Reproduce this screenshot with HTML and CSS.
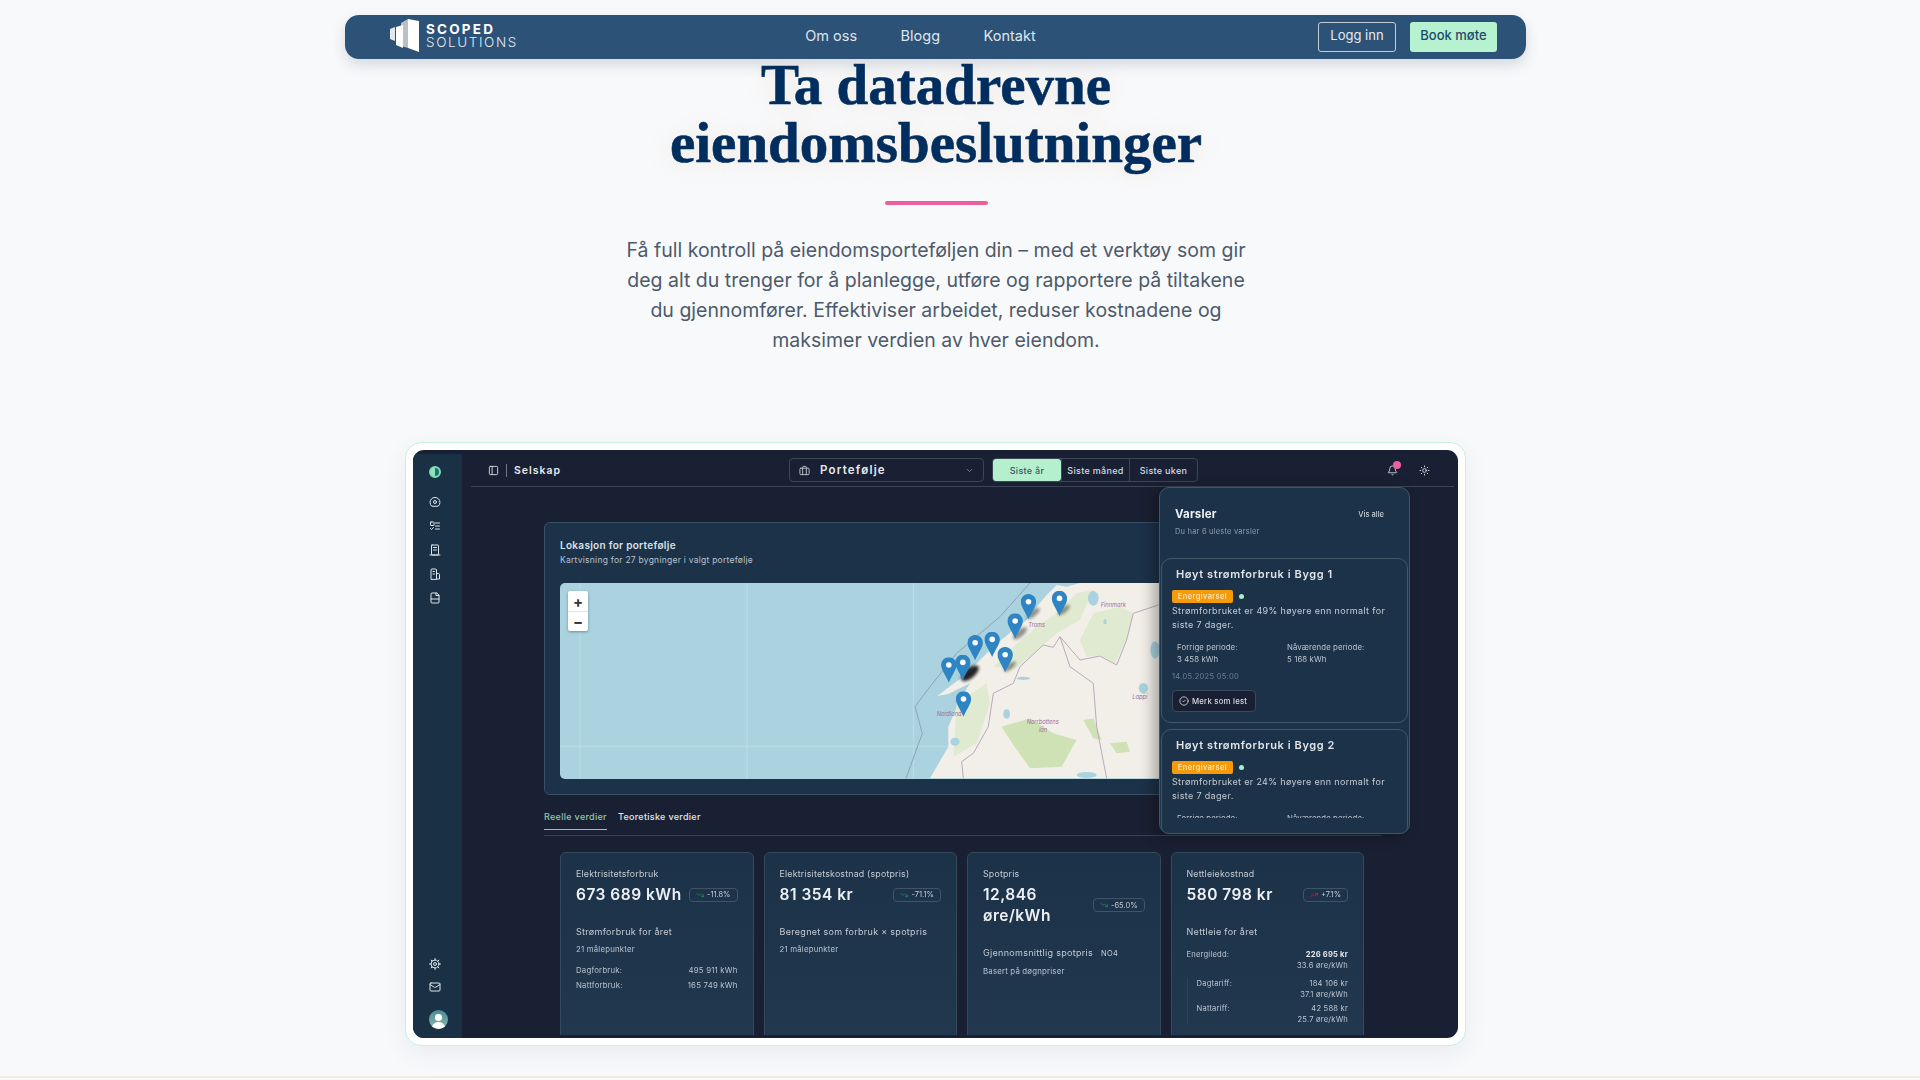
FILE: index.html
```html
<!DOCTYPE html>
<html lang="no">
<head>
    <meta charset="UTF-8">
    <meta name="viewport" content="width=device-width, initial-scale=1.0">
    <title>Scoped Solutions</title>
    <link rel="stylesheet" href="styles.css">
</head>
<body>
    <svg class="icon-sprite" aria-hidden="true">
        <symbol id="i-panel" viewBox="0 0 24 24"><rect x="3" y="3" width="18" height="18" rx="2"/><path d="M9 3v18"/></symbol>
        <symbol id="i-case" viewBox="0 0 24 24"><rect x="2" y="7" width="20" height="14" rx="2"/><path d="M16 21V5a2 2 0 0 0-2-2h-4a2 2 0 0 0-2 2v16"/></symbol>
        <symbol id="i-chevron" viewBox="0 0 24 24"><path d="m6 9 6 6 6-6"/></symbol>
        <symbol id="i-bell" viewBox="0 0 24 24"><path d="M10.268 21a2 2 0 0 0 3.464 0"/><path d="M3.262 15.326A1 1 0 0 0 4 17h16a1 1 0 0 0 .74-1.673C19.41 13.956 18 12.499 18 8A6 6 0 0 0 6 8c0 4.499-1.411 5.956-2.738 7.326"/></symbol>
        <symbol id="i-sun" viewBox="0 0 24 24"><circle cx="12" cy="12" r="4"/><path d="M12 2v2M12 20v2M4.93 4.93l1.41 1.41M17.66 17.66l1.41 1.41M2 12h2M20 12h2M6.34 17.66l-1.41 1.41M19.07 4.93l-1.41 1.41"/></symbol>
        <symbol id="i-gauge" viewBox="0 0 24 24"><path d="M5 20a10 10 0 1 1 14 0Z"/><circle cx="12" cy="12" r="3"/></symbol>
        <symbol id="i-list" viewBox="0 0 24 24"><rect x="3" y="4" width="7" height="7" rx="1"/><path d="m3 17 2 2 4-4M13 6h8M13 12h8M13 18h8"/></symbol>
        <symbol id="i-building" viewBox="0 0 24 24"><rect x="5" y="2" width="14" height="20" rx="1"/><path d="M2 22h20M9 7h6M9 12h6"/></symbol>
        <symbol id="i-office" viewBox="0 0 24 24"><path d="M4 22V4a2 2 0 0 1 2-2h7a2 2 0 0 1 2 2v18Z"/><path d="M15 11h4a2 2 0 0 1 2 2v9h-6M8 7h3M8 12h3"/></symbol>
        <symbol id="i-file" viewBox="0 0 24 24"><path d="M15 2H6a2 2 0 0 0-2 2v16a2 2 0 0 0 2 2h12a2 2 0 0 0 2-2V7Z"/><path d="M14 2v5h6M4 14h16"/></symbol>
        <symbol id="i-gear" viewBox="0 0 24 24"><circle cx="12" cy="12" r="8"/><circle cx="12" cy="12" r="3"/><path d="M12 1v3M12 20v3M1 12h3M20 12h3M4.2 4.2l2.1 2.1M17.7 17.7l2.1 2.1M4.2 19.8l2.1-2.1M17.7 6.3l2.1-2.1"/></symbol>
        <symbol id="i-mail" viewBox="0 0 24 24"><rect x="2" y="4" width="20" height="16" rx="2"/><path d="m22 7-8.97 5.7a1.94 1.94 0 0 1-2.06 0L2 7"/></symbol>
        <symbol id="i-check" viewBox="0 0 24 24"><circle cx="12" cy="12" r="10"/><path d="m9 12 2 2 4-4"/></symbol>
        <symbol id="i-down" viewBox="0 0 24 24"><path d="M22 17l-8.5-8.5-5 5L2 7M16 17h6v-6"/></symbol>
        <symbol id="i-up" viewBox="0 0 24 24"><path d="M22 7l-8.500 8.500-5-5L2 17M16 7h6v6"/></symbol>
        <symbol id="i-pin" viewBox="0 0 25 41"><path d="M12.5 0C5.600 0 0 5.600 0 12.500 0 20 8 30 12.500 41 17 30 25 20 25 12.500 25 5.600 19.400 0 12.500 0Z" fill="#2f84c4" stroke="none"/><circle cx="12.500" cy="12.500" r="4.500" fill="#fff" stroke="none"/></symbol>
    </svg>

    <header class="topbar">
        <a class="brand" href="#">
            <svg class="brand-mark" viewBox="0 0 30 34">
                <polygon points="0,11 5,9 5,23 0,21" fill="#e3e8ec"/>
                <polygon points="11,5 18,1 18,30 11,28" fill="#b9c0c6"/>
                <polygon points="6,9 13,7 13,30 6,27" fill="#ffffff"/>
                <polygon points="18,1 29,3 29,34 18,30" fill="#ffffff"/>
            </svg>
            <span class="brand-text">
                <span class="brand-top">SCOPED</span>
                <span class="brand-bottom">SOLUTIONS</span>
            </span>
        </a>
        <nav class="top-links">
            <a href="#">Om oss</a>
            <a href="#">Blogg</a>
            <a href="#">Kontakt</a>
        </nav>
        <div class="top-actions">
            <button class="btn-login">Logg inn</button>
            <button class="btn-book">Book møte</button>
        </div>
    </header>

    <section class="hero">
        <h1>Ta datadrevne<br>eiendomsbeslutninger</h1>
        <div class="hero-rule"></div>
        <p>Få full kontroll på eiendomsporteføljen din – med et verktøy som gir deg alt du trenger for å planlegge, utføre og rapportere på tiltakene du gjennomfører. Effektiviser arbeidet, reduser kostnadene og maksimer verdien av hver eiendom.</p>
    </section>

    <div class="shot-frame">
        <div class="dash">
            <aside class="side">
                <div class="side-logo"></div>
                <svg class="ic side-ic"><use href="#i-gauge"/></svg>
                <svg class="ic side-ic"><use href="#i-list"/></svg>
                <svg class="ic side-ic"><use href="#i-building"/></svg>
                <svg class="ic side-ic"><use href="#i-office"/></svg>
                <svg class="ic side-ic"><use href="#i-file"/></svg>
                <div class="side-bottom">
                    <svg class="ic side-ic"><use href="#i-gear"/></svg>
                    <svg class="ic side-ic"><use href="#i-mail"/></svg>
                    <div class="avatar"><span class="avatar-head"></span><span class="avatar-body"></span></div>
                </div>
            </aside>

            <main class="main">
                <div class="dash-head">
                    <svg class="ic head-ic"><use href="#i-panel"/></svg>
                    <span class="head-sep"></span>
                    <span class="head-title">Selskap</span>
                    <div class="picker">
                        <svg class="ic picker-ic"><use href="#i-case"/></svg>
                        <span class="picker-name">Portefølje</span>
                        <svg class="ic picker-chev"><use href="#i-chevron"/></svg>
                    </div>
                    <div class="range">
                        <span class="range-item range-on">Siste år</span>
                        <span class="range-item">Siste måned</span>
                        <span class="range-item">Siste uken</span>
                    </div>
                    <div class="head-tools">
                        <span class="bell"><svg class="ic bell-ic"><use href="#i-bell"/></svg><span class="bell-dot"></span></span>
                        <svg class="ic sun-ic"><use href="#i-sun"/></svg>
                    </div>
                </div>

                <div class="content">
                    <div class="map-card">
                        <div class="map-title">Lokasjon for portefølje</div>
                        <div class="map-sub">Kartvisning for 27 bygninger i valgt portefølje</div>
                        <div class="map">
                            <svg class="map-svg" viewBox="0 0 821 196" preserveAspectRatio="xMinYMin slice">
                                <g transform="translate(320 -13) scale(.3333)">
                                    <path class="grid-line" d="M-900 0V700M-399 0V700M100 0V700"/>
                                    <path class="grid-line" d="M-960 529H1500"/>
                                    <path class="land" d="M600 39 560 50 530 45 500 75 470 110 440 150 400 180 340 230 300 270 250 320 215 345 172 378 205 372 270 340 240 390 205 470 205 530 150 625H1500V39Z"/>
                                    <g class="forest-soft">
                                        <path class="forest" d="M365 470 450 445 520 490 590 510 545 590 450 595 400 525Z"/>
                                        <path class="forest" d="M610 450 640 445 665 510 640 505Z"/>
                                        <path class="forest" d="M690 520 740 515 750 545 710 550Z"/>
                                        <path class="forest thin" d="M600 210 640 130 720 110 760 130 740 210 705 280 660 255 620 260Z"/>
                                        <path class="forest thin" d="M340 290 400 230 470 170 530 130 590 70 640 60 600 150 530 190 450 260 400 300Z"/>
                                        <path class="forest thin" d="M230 400 320 340 330 400 290 520 220 560Z"/>
                                    </g>
                                    <g class="lake">
                                        <ellipse cx="640" cy="85" rx="16" ry="22"/>
                                        <ellipse cx="675" cy="155" rx="5" ry="8"/>
                                        <ellipse cx="380" cy="432" rx="10" ry="14"/>
                                        <ellipse cx="790" cy="355" rx="14" ry="16"/>
                                        <ellipse cx="825" cy="240" rx="14" ry="26"/>
                                        <ellipse cx="225" cy="515" rx="14" ry="12"/>
                                        <ellipse cx="430" cy="325" rx="20" ry="5"/>
                                        <ellipse cx="620" cy="615" rx="30" ry="9"/>
                                    </g>
                                    <path class="sea-line" d="M450 39 360 140 230 250 150 350 105 410 127 490 78 625"/>
                                    <path class="border" d="M835 105 760 130 740 210 710 285 660 258 600 270 540 200 520 232 490 225 420 290 400 340 340 370 325 470 280 550 245 575 250 625"/>
                                    <path class="border" d="M540 200 570 290 640 340 650 470 680 625"/>
                                    <text class="map-label" x="662" y="112" font-size="17">Finnmark</text>
                                    <text class="map-label" x="445" y="170" font-size="17">Troms</text>
                                    <text class="map-label" x="170" y="437" font-size="17">Nordland</text>
                                    <text class="map-label" x="440" y="462" font-size="17">Norrbottens</text>
                                    <text class="map-label" x="477" y="485" font-size="17">län</text>
                                    <text class="map-label" x="757" y="387" font-size="17">Lappi</text>
                                    <ellipse class="pin-shadow" cx="460" cy="130" rx="24" ry="9" transform="rotate(-40 460 130)"/>
                                    <ellipse class="pin-shadow" cx="552" cy="120" rx="22" ry="8" transform="rotate(-40 552 120)"/>
                                    <ellipse class="pin-shadow" cx="420" cy="190" rx="26" ry="10" transform="rotate(-40 420 190)"/>
                                    <ellipse class="pin-shadow dark" cx="270" cy="310" rx="32" ry="15" transform="rotate(-40 270 310)"/>
                                    <ellipse class="pin-shadow" cx="390" cy="290" rx="22" ry="8" transform="rotate(-40 390 290)"/>
                                    <use class="pin" href="#i-pin" x="422" y="72" width="47" height="76"/>
                                    <use class="pin" href="#i-pin" x="515" y="62" width="47" height="76"/>
                                    <use class="pin" href="#i-pin" x="382" y="130" width="47" height="76"/>
                                    <use class="pin" href="#i-pin" x="262" y="195" width="47" height="76"/>
                                    <use class="pin" href="#i-pin" x="313" y="185" width="47" height="76"/>
                                    <use class="pin" href="#i-pin" x="352" y="231" width="47" height="76"/>
                                    <use class="pin" href="#i-pin" x="183" y="262" width="47" height="76"/>
                                    <use class="pin" href="#i-pin" x="225" y="254" width="47" height="76"/>
                                    <use class="pin" href="#i-pin" x="227" y="364" width="47" height="76"/>
                                </g>
                            </svg>
                            <div class="zoom-box">
                                <span class="zoom-btn">+</span>
                                <span class="zoom-btn">−</span>
                            </div>
                        </div>
                    </div>

                    <div class="value-tabs">
                        <span class="value-tab value-tab-on">Reelle verdier</span>
                        <span class="value-tab">Teoretiske verdier</span>
                    </div>

                    <div class="stats">
                        <div class="stat">
                            <div class="stat-label">Elektrisitetsforbruk</div>
                            <div class="stat-main">
                                <div class="stat-value">673 689 kWh</div>
                                <span class="delta"><svg class="ic delta-down"><use href="#i-down"/></svg>-11.8%</span>
                            </div>
                            <div class="stat-note">Strømforbruk for året</div>
                            <div class="stat-small">21 målepunkter</div>
                            <div class="stat-row first"><span>Dagforbruk:</span><span>495 911 kWh</span></div>
                            <div class="stat-row"><span>Nattforbruk:</span><span>165 749 kWh</span></div>
                        </div>
                        <div class="stat">
                            <div class="stat-label">Elektrisitetskostnad (spotpris)</div>
                            <div class="stat-main">
                                <div class="stat-value">81 354 kr</div>
                                <span class="delta"><svg class="ic delta-down"><use href="#i-down"/></svg>-71.1%</span>
                            </div>
                            <div class="stat-note">Beregnet som forbruk × spotpris</div>
                            <div class="stat-small">21 målepunkter</div>
                        </div>
                        <div class="stat">
                            <div class="stat-label">Spotpris</div>
                            <div class="stat-main stat-main-tall">
                                <div class="stat-value">12,846<br>øre/kWh</div>
                                <span class="delta"><svg class="ic delta-down"><use href="#i-down"/></svg>-65.0%</span>
                            </div>
                            <div class="stat-note">Gjennomsnittlig spotpris <span class="zone">NO4</span></div>
                            <div class="stat-small">Basert på døgnpriser</div>
                        </div>
                        <div class="stat">
                            <div class="stat-label">Nettleiekostnad</div>
                            <div class="stat-main">
                                <div class="stat-value">580 798 kr</div>
                                <span class="delta"><svg class="ic delta-up"><use href="#i-up"/></svg>+7.1%</span>
                            </div>
                            <div class="stat-note">Nettleie for året</div>
                            <div class="fee-row fee-first"><span>Energiledd:</span><span class="fee-val"><b>226 695 kr</b><br>33.6 øre/kWh</span></div>
                            <div class="fee-sub">
                                <div class="fee-row"><span>Dagtariff:</span><span class="fee-val">184 106 kr<br>37.1 øre/kWh</span></div>
                                <div class="fee-row"><span>Nattariff:</span><span class="fee-val">42 588 kr<br>25.7 øre/kWh</span></div>
                            </div>
                        </div>
                    </div>
                </div>

                <div class="alerts">
                    <div class="alerts-head">
                        <span class="alerts-title">Varsler</span>
                        <span class="alerts-all">Vis alle</span>
                    </div>
                    <div class="alerts-sub">Du har 6 uleste varsler</div>
                    <div class="alert">
                        <div class="alert-title">Høyt strømforbruk i Bygg 1</div>
                        <div class="alert-tags"><span class="alert-tag">Energivarsel</span><span class="alert-dot"></span></div>
                        <div class="alert-text">Strømforbruket er 49% høyere enn normalt for siste 7 dager.</div>
                        <div class="alert-periods">
                            <div>Forrige periode:<br>3 458 kWh</div>
                            <div>Nåværende periode:<br>5 168 kWh</div>
                        </div>
                        <div class="alert-date">14.05.2025 05:00</div>
                        <button class="alert-btn"><svg class="ic alert-btn-ic"><use href="#i-check"/></svg>Merk som lest</button>
                    </div>
                    <div class="alert alert-cut">
                        <div class="alert-title">Høyt strømforbruk i Bygg 2</div>
                        <div class="alert-tags"><span class="alert-tag">Energivarsel</span><span class="alert-dot"></span></div>
                        <div class="alert-text">Strømforbruket er 24% høyere enn normalt for siste 7 dager.</div>
                        <div class="alert-periods">
                            <div>Forrige periode:<br>3 458 kWh</div>
                            <div>Nåværende periode:<br>4 288 kWh</div>
                        </div>
                    </div>
                </div>
            </main>
        </div>
    </div>

    <div class="next-section"></div>
</body>
</html>
```

FILE: styles.css
```css
* {
    box-sizing: border-box;
}

html,
body {
    height: 100%;
}

body {
    margin: 0;
    height: 100vh;
    overflow: hidden;
    background-color: #f8f9fb;
    font-family: 'Inter', 'Liberation Sans', sans-serif;
}

.icon-sprite {
    display: none;
}

.ic {
    fill: none;
    stroke: currentColor;
    stroke-width: 2;
    stroke-linecap: round;
    stroke-linejoin: round;
    flex: none;
}

/* top bar */
.topbar {
    display: flex;
    align-items: center;
    width: 1181px;
    height: 44px;
    margin: 15px 0 0 345px;
    padding: 0 29px 0 45px;
    background-color: #2c5277;
    border-radius: 14px;
    box-shadow: 0 6px 14px rgba(30, 50, 70, 0.16);
    position: relative;
    z-index: 2;
}

.brand {
    display: flex;
    align-items: center;
    gap: 6px;
    text-decoration: none;
    color: #fff;
}

.brand-mark {
    width: 30px;
    height: 34px;
    margin-top: -4px;
}

.brand-text {
    display: flex;
    flex-direction: column;
    line-height: 12.500px;
    margin-top: -3px;
}

.brand-top {
    font-size: 13.5px;
    font-weight: 700;
    letter-spacing: 2.2px;
}

.brand-bottom {
    font-size: 13.5px;
    font-weight: 300;
    letter-spacing: 1.600px;
    color: #e4eaf0;
}

.top-links {
    display: flex;
    gap: 43.500px;
    margin: -4px 0 0 auto;
    padding-left: 5px;
}

.top-links a {
    color: #dfe5ec;
    text-decoration: none;
    font-size: 14.5px;
}

.top-actions {
    display: flex;
    gap: 14px;
    margin-left: auto;
    margin-top: -1px;
}

.top-actions button {
    height: 30px;
    font-family: inherit;
    font-size: 13px;
    border-radius: 3px;
    padding: 0 0 3px;
    white-space: nowrap;
}

.btn-login {
    width: 78px;
    background: transparent;
    color: #e6ebf0;
    border: 1px solid #c4ced8;
}

.btn-book {
    width: 87px;
    background-color: #b6f2cf;
    color: #1c4a6e;
    border: none;
    font-weight: 500;
}

/* hero */
.hero {
    text-align: center;
    width: 1040px;
    margin: -3px 0 0 416px;
}

.hero h1 {
    margin: 0;
    font-family: 'Liberation Serif', serif;
    font-size: 57px;
    font-weight: 700;
    line-height: 57.6px;
    color: #012e5e;
    -webkit-text-stroke: 0.6px #012e5e;
    text-shadow: 0 2px 24px rgba(235, 215, 190, 0.45);
}

.hero-rule {
    width: 103px;
    height: 4px;
    margin: 30px auto 0;
    background-color: #ec5f9c;
    border-radius: 2px;
}

.hero p {
    width: 640px;
    margin: 30px auto 0;
    font-size: 19.5px;
    line-height: 30px;
    color: #4d5a6b;
}

/* dashboard picture */
.shot-frame {
    width: 1061px;
    height: 604px;
    margin: 87px 0 0 405px;
    padding: 7px;
    background-color: #fff;
    border: 1px solid #c6f3d8;
    border-radius: 16px;
    box-shadow: 0 8px 24px rgba(40, 60, 80, 0.07);
}

.dash {
    display: flex;
    height: 588px;
    overflow: hidden;
    background-color: #1a2033;
    border-radius: 11px;
    filter: blur(0.5px);
    color: #e5e9ee;
}

.side {
    width: 49px;
    margin-top: 4px;
    padding: 12px 6px 9px 0;
    display: flex;
    flex-direction: column;
    align-items: center;
    gap: 12px;
    background-color: #1a3145;
    flex: none;
}

.side-logo {
    width: 12px;
    height: 12px;
    margin-bottom: 6px;
    border-radius: 50%;
    background: linear-gradient(90deg, #8fe3bb 50%, #1e6f7a 50%);
    border: 2px solid #7fdcb2;
}

.side-ic {
    width: 12px;
    height: 12px;
    color: #dfe5ea;
}

.side-bottom {
    margin-top: auto;
    display: flex;
    flex-direction: column;
    align-items: center;
    gap: 11px;
}

.avatar {
    width: 19px;
    height: 19px;
    margin: 6px 0 0 8px;
    border-radius: 50%;
    background: linear-gradient(#4a8c9a, #8fb5a8);
    overflow: hidden;
    display: flex;
    flex-direction: column;
    align-items: center;
}

.avatar-head {
    width: 7px;
    height: 7px;
    margin-top: 4px;
    border-radius: 50%;
    background-color: #fff;
}

.avatar-body {
    width: 13px;
    height: 8px;
    margin-top: 1px;
    border-radius: 6px 6px 0 0;
    background-color: #fff;
}

.main {
    position: relative;
    flex: 1;
    min-width: 0;
    margin-left: 9px;
    margin-right: 4px;
}

.dash-head {
    display: flex;
    align-items: center;
    height: 37px;
    padding: 4px 0 0 17px;
    border-bottom: 1px solid #3c4554;
}

.head-ic {
    width: 11px;
    height: 11px;
    color: #d5dbe2;
}

.head-sep {
    width: 1px;
    height: 13px;
    margin: 0 7px;
    background-color: #6c7684;
}

.head-title {
    width: 275px;
    font-size: 10.5px;
    font-weight: 600;
    letter-spacing: 1px;
}

.picker {
    display: flex;
    align-items: center;
    width: 195px;
    height: 24px;
    padding: 0 9px;
    border: 1px solid #3c4656;
    border-radius: 4px;
}

.picker-ic {
    width: 11px;
    height: 11px;
    color: #bfc6cf;
}

.picker-name {
    margin-left: 10px;
    font-size: 11.5px;
    font-weight: 600;
    letter-spacing: 1.2px;
}

.picker-chev {
    width: 9px;
    height: 9px;
    margin-left: auto;
    color: #8a93a0;
}

.range {
    display: flex;
    height: 24px;
    margin-left: 8px;
    border: 1px solid #3c4656;
    border-radius: 4px;
}

.range-item {
    display: flex;
    align-items: center;
    justify-content: center;
    width: 68px;
    font-size: 9px;
    font-weight: 500;
    letter-spacing: 0.3px;
    color: #d5dbe2;
    border-left: 1px solid #3c4656;
}

.range-on {
    border-left: none;
    background-color: #b4f0cd;
    color: #3b5568;
    border-radius: 3px;
}

.head-tools {
    display: flex;
    align-items: center;
    gap: 21px;
    margin-left: 189px;
}

.bell {
    position: relative;
    display: flex;
}

.bell-ic {
    width: 11px;
    height: 11px;
    color: #c8cfd8;
}

.bell-dot {
    position: absolute;
    top: -4px;
    right: -3px;
    width: 8px;
    height: 8px;
    border-radius: 50%;
    background-color: #ee5f9e;
}

.sun-ic {
    width: 11px;
    height: 11px;
    color: #d0d6de;
}

.content {
    padding: 35px 0 0 73px;
    width: 910px;
}

.map-card {
    height: 273px;
    padding: 15px 15px 0;
    background-color: #1c3249;
    border: 1px solid #3a5064;
    border-radius: 6px;
}

.map-title {
    font-size: 10px;
    font-weight: 600;
    letter-spacing: 0.3px;
    line-height: 14px;
    color: #dbe0e6;
}

.map-sub {
    margin-top: 2px;
    font-size: 8.5px;
    letter-spacing: 0.25px;
    line-height: 13px;
    color: #b9c2cc;
}

.map {
    position: relative;
    height: 196px;
    margin-top: 16px;
    overflow: hidden;
    border-radius: 5px;
    background-color: #aad3df;
}

.map-svg {
    display: block;
    width: 100%;
    height: 100%;
}

.land {
    fill: #f2efe9;
}

.forest-soft {
    filter: blur(2px);
}

.forest {
    fill: #cfe2b6;
}

.forest.thin {
    fill: #e0ead0;
}

.lake {
    fill: #aad3df;
    filter: blur(1px);
}

.grid-line {
    fill: none;
    stroke: #bcdde4;
    stroke-width: 3;
}

.sea-line {
    fill: none;
    stroke: #8fa4ad;
    stroke-width: 3;
}

.border {
    fill: none;
    stroke: #b7aabb;
    stroke-width: 3;
}

.map-label {
    font-family: 'Inter', sans-serif;
    font-style: italic;
    fill: #9a6e9e;
}

.pin-shadow {
    fill: #000;
    opacity: 0.4;
    filter: blur(4px);
}

.pin-shadow.dark {
    opacity: 0.85;
}

.zoom-box {
    position: absolute;
    top: 8px;
    left: 8px;
    width: 20px;
    display: flex;
    flex-direction: column;
    background-color: #fff;
    border-radius: 2px;
    box-shadow: 0 1px 3px rgba(0, 0, 0, 0.35);
}

.zoom-btn {
    height: 20px;
    display: flex;
    align-items: center;
    justify-content: center;
    font-size: 15px;
    font-weight: 700;
    line-height: 1;
    color: #333;
}

.zoom-btn + .zoom-btn {
    border-top: 1px solid #e5e5e5;
}

.value-tabs {
    display: flex;
    gap: 11px;
    margin-top: 15px;
    border-bottom: 1px solid #364452;
    padding-bottom: 5px;
}

.value-tab {
    position: relative;
    font-size: 9px;
    font-weight: 500;
    letter-spacing: 0.3px;
    line-height: 14px;
    padding-bottom: 5px;
    color: #e0e5ea;
}

.value-tab-on {
    color: #8fc9a8;
    border-bottom: 1px solid #8fc9a8;
}

.stats {
    display: grid;
    grid-template-columns: repeat(4, 193.500px);
    gap: 10px;
    height: 183px;
    margin: 16px 0 0 16px;
    overflow: hidden;
}

.stat {
    padding: 14px 15px 0;
    height: 200px;
    background: linear-gradient(#1c3249, #21384f);
    border: 1px solid #33495c;
    border-radius: 6px;
}

.stat-label {
    font-size: 8.8px;
    letter-spacing: 0.2px;
    line-height: 13px;
    color: #c5ccd4;
}

.stat-main {
    display: flex;
    align-items: center;
    justify-content: space-between;
    margin-top: 4px;
    min-height: 21px;
}

.stat-value {
    font-size: 15.5px;
    font-weight: 600;
    letter-spacing: 0.5px;
    line-height: 21px;
    color: #eef1f4;
}

.delta {
    display: flex;
    align-items: center;
    gap: 3px;
    height: 14px;
    padding: 0 6px;
    font-size: 7.5px;
    color: #c5ccd4;
    border: 1px solid #3f5566;
    border-radius: 4px;
}

.delta .ic {
    width: 8px;
    height: 8px;
}

.delta-down {
    color: #16a34a;
}

.delta-up {
    color: #dc2638;
}

.stat-note {
    margin-top: 20px;
    font-size: 9px;
    letter-spacing: 0.3px;
    line-height: 13px;
    color: #c5ccd4;
}

.zone {
    margin-left: 5px;
    font-size: 7.5px;
}

.stat-small {
    margin-top: 5px;
    font-size: 7.8px;
    letter-spacing: 0.2px;
    line-height: 12px;
    color: #b9c2cc;
}

.stat-row {
    display: flex;
    justify-content: space-between;
    margin-top: 5px;
    font-size: 7.8px;
    letter-spacing: 0.2px;
    line-height: 10px;
    color: #b9c2cc;
}

.stat-row.first {
    margin-top: 10px;
}

.fee-row {
    display: flex;
    justify-content: space-between;
    font-size: 7.6px;
    letter-spacing: 0.2px;
    line-height: 11px;
    color: #bcc4cd;
}

.fee-first {
    margin-top: 11px;
}

.fee-val {
    text-align: right;
}

.fee-val b {
    color: #e3e7eb;
}

.fee-sub {
    margin-top: 7px;
    padding: 0 0 0 9px;
    border-left: 1px solid #2b4257;
}

.fee-sub .fee-row {
    margin-bottom: 3px;
}

/* alerts panel */
.alerts {
    position: absolute;
    top: 37px;
    left: 688px;
    width: 251px;
    height: 347px;
    padding: 19px 1px 0;
    overflow: hidden;
    background-color: #1c3249;
    border: 1px solid #435666;
    border-radius: 10px;
    box-shadow: -6px 2px 14px rgba(0, 0, 0, 0.3);
}

.alerts-head {
    display: flex;
    justify-content: space-between;
    align-items: center;
    padding: 0 24px 0 14px;
}

.alerts-title {
    font-size: 11.5px;
    font-weight: 700;
    letter-spacing: 0.2px;
    color: #eef1f4;
}

.alerts-all {
    font-size: 7.5px;
    font-weight: 500;
    color: #c5ccd4;
}

.alerts-sub {
    margin-top: 6px;
    padding-left: 14px;
    font-size: 7.5px;
    letter-spacing: 0.2px;
    color: #8e9aa6;
}

.alert {
    height: 165px;
    margin-top: 6px;
    padding: 8px 10px 0;
    border: 1px solid #435666;
    border-radius: 10px;
}

.alerts-sub + .alert {
    margin-top: 22px;
}

.alert-title {
    padding-left: 4px;
    font-size: 11px;
    font-weight: 600;
    letter-spacing: 0.6px;
    line-height: 14px;
    color: #dfe4e9;
}

.alert-tags {
    display: flex;
    align-items: center;
    gap: 6px;
    margin-top: 9px;
}

.alert-tag {
    display: flex;
    align-items: center;
    justify-content: center;
    width: 61px;
    height: 13px;
    font-size: 7.5px;
    font-weight: 500;
    letter-spacing: 0.4px;
    color: #ffe9c2;
    background-color: #f59a0b;
    border-radius: 2px;
}

.alert-dot {
    width: 5px;
    height: 5px;
    border-radius: 50%;
    background-color: #a8eec6;
}

.alert-text {
    margin-top: 1px;
    font-size: 9px;
    letter-spacing: 0.35px;
    line-height: 14px;
    color: #c5ccd4;
}

.alert-periods {
    display: grid;
    grid-template-columns: 110px 1fr;
    margin-top: 9px;
    padding-left: 5px;
    font-size: 7.8px;
    letter-spacing: 0.1px;
    line-height: 12px;
    color: #bcc4cd;
}

.alert-date {
    margin-top: 6px;
    font-size: 7.5px;
    letter-spacing: 0.3px;
    line-height: 12px;
    color: #6f7f8e;
}

.alert-btn {
    display: flex;
    align-items: center;
    gap: 3px;
    width: 84px;
    height: 22px;
    margin-top: 7px;
    padding: 0 6px;
    font-family: inherit;
    font-size: 7.8px;
    font-weight: 500;
    letter-spacing: 0.2px;
    color: #d5dbe2;
    background-color: #1a2033;
    border: 1px solid #3a4a5b;
    border-radius: 4px;
}

.alert-btn-ic {
    width: 10px;
    height: 10px;
}

.alert-cut {
    height: 107px;
    overflow: hidden;
    position: relative;
}

.alert-cut .alert-periods {
    height: 6px;
    overflow: hidden;
}

.next-section {
    height: 2px;
    margin-top: 30px;
    background-color: #f3ebe1;
}
```
